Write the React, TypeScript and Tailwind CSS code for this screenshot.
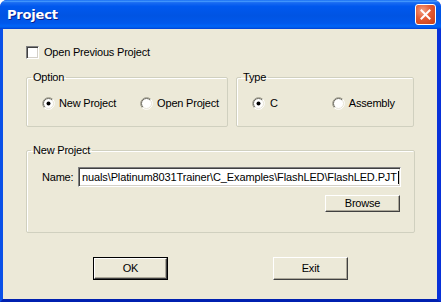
import React from "react";

function Radio({ checked }: { checked?: boolean }) {
  return (
    <svg width="13" height="13" viewBox="0 0 13 13" className="shrink-0">
      <circle cx="6.5" cy="6.5" r="5.5" fill="#ffffff" />
      <path d="M 2.26 10.74 A 6 6 0 0 1 10.74 2.26" stroke="#9c9a8c" strokeWidth="1" fill="none" />
      <path d="M 10.74 2.26 A 6 6 0 0 1 2.26 10.74" stroke="#ffffff" strokeWidth="1" fill="none" />
      <path d="M 2.96 10.04 A 5 5 0 0 1 10.04 2.96" stroke="#6b695e" strokeWidth="1" fill="none" />
      <path d="M 10.04 2.96 A 5 5 0 0 1 2.96 10.04" stroke="#e6e3d6" strokeWidth="1" fill="none" />
      {checked && <circle cx="6.5" cy="6.5" r="2" fill="#000000" />}
    </svg>
  );
}

function GroupBox({
  label,
  className,
  children,
}: {
  label: string;
  className?: string;
  children: React.ReactNode;
}) {
  return (
    <fieldset
      className={
        "border border-[#d0d0bf] rounded-[2px] shadow-[inset_1px_1px_0_#ffffff] " + (className ?? "")
      }
    >
      <legend className="ml-[4px] px-[2px] leading-[13px]">{label}</legend>
      {children}
    </fieldset>
  );
}

function Button({ label, isDefault, className }: { label: string; isDefault?: boolean; className?: string }) {
  const inner = (
    <div className="flex-1 flex items-center justify-center border-t border-l border-t-white border-l-white border-b border-r border-b-[#404040] border-r-[#404040] shadow-[inset_-1px_-1px_0_#aca899]">
      {label}
    </div>
  );
  return (
    <div
      className={
        "flex bg-[#ece9d8] " + (isDefault ? "border border-black " : "") + (className ?? "")
      }
    >
      {inner}
    </div>
  );
}

export default function App() {
  return (
    <div className="w-[441px] h-[302px] flex flex-col bg-[#0831d9] rounded-t-[7px] overflow-hidden font-['Liberation_Sans',Arial,sans-serif] text-[11px] tracking-[-0.2px] text-black select-none">
      {/* Title bar */}
      <div className="h-[29px] shrink-0 flex items-center pl-[7px] pr-[5px] bg-[linear-gradient(180deg,#0a5fef_0%,#4aa0ff_4%,#1a6cf2_9%,#0058ee_22%,#0054e3_55%,#0058ec_80%,#0064f8_90%,#005ae8_95%,#003dd7_100%)]">
        <span className="text-white font-bold text-[13px] leading-none [text-shadow:1px_1px_0_#0a1e8c] font-['DejaVu_Sans',sans-serif] tracking-[-0.2px]">
          Project
        </span>
        <div className="ml-auto w-[21px] h-[21px] rounded-[3px] border border-white bg-[radial-gradient(circle_at_35%_30%,#f4a184_0%,#e35a33_45%,#c73e14_100%)] flex items-center justify-center">
          <svg width="11" height="11" viewBox="0 0 11 11">
            <path d="M1.5 1.5 L9.5 9.5 M9.5 1.5 L1.5 9.5" stroke="#ffffff" strokeWidth="2" strokeLinecap="square" />
          </svg>
        </div>
      </div>

      {/* Client area */}
      <div className="flex-1 flex border-l-[3px] border-l-[#0a50e8] border-r-[4px] border-r-[#0831d9] border-b-[3px] border-b-[#0020b0]">
        <div className="flex-1 bg-[#ece9d8] flex flex-col pl-[23px]">
          {/* Checkbox */}
          <div className="mt-[17px] flex items-center h-[13px]">
            <div className="w-[13px] h-[13px] bg-white border-t border-l border-t-[#808080] border-l-[#808080] border-b border-r border-b-white border-r-white shadow-[inset_1px_1px_0_#404040,inset_-1px_-1px_0_#d4d0c8]" />
            <span className="ml-[5px] leading-[13px]">Open Previous Project</span>
          </div>

          {/* Option / Type groups */}
          <div className="mt-[12px] flex gap-[8px]">
            <GroupBox label="Option" className="w-[202px] h-[56px]">
              <div className="pt-[11px] pl-[15px] flex items-center">
                <Radio checked />
                <span className="ml-[4px]">New Project</span>
                <div className="ml-[24px]">
                  <Radio />
                </div>
                <span className="ml-[4px]">Open Project</span>
              </div>
            </GroupBox>
            <GroupBox label="Type" className="w-[178px] h-[56px]">
              <div className="pt-[11px] pl-[15px] flex items-center">
                <Radio checked />
                <span className="ml-[5px]">C</span>
                <div className="ml-[54px]">
                  <Radio />
                </div>
                <span className="ml-[4px]">Assembly</span>
              </div>
            </GroupBox>
          </div>

          {/* New Project group */}
          <GroupBox label="New Project" className="mt-[17px] w-[389px] h-[89px]">
            <div className="pt-[10px] pl-[15px] flex items-center">
              <span className="w-[36px]">Name:</span>
              <div className="w-[323px] h-[20px] bg-white border-t border-l border-t-[#808080] border-l-[#808080] border-b border-r border-b-white border-r-white shadow-[inset_1px_1px_0_#404040,inset_-1px_-1px_0_#d4d0c8] flex items-center pl-[3px] overflow-hidden whitespace-nowrap">
                <span className="tracking-[-0.12px]">nuals\Platinum8031Trainer\C_Examples\FlashLED\FlashLED.PJT</span>
                <span className="ml-[1px] w-[1px] h-[13px] bg-black shrink-0" />
              </div>
            </div>
            <div className="mt-[8px] flex justify-end pr-[14px]">
              <Button label="Browse" className="w-[75px] h-[17px]" />
            </div>
          </GroupBox>

          {/* Bottom buttons */}
          <div className="mt-[24px] flex">
            <Button label="OK" isDefault className="ml-[67px] w-[75px] h-[23px]" />
            <Button label="Exit" className="ml-[105px] w-[75px] h-[23px]" />
          </div>
        </div>
      </div>
    </div>
  );
}
